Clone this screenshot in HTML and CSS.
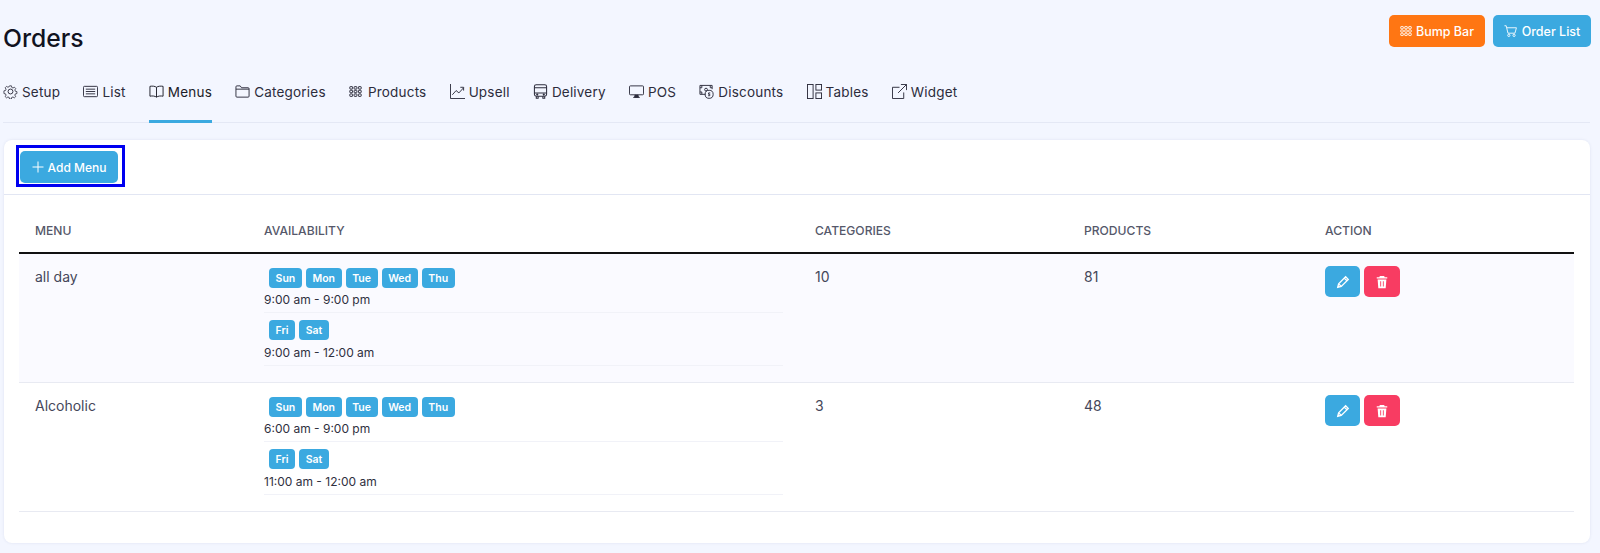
FILE: index.html
```html
<!DOCTYPE html>
<html lang="en">
<head>
<meta charset="utf-8">
<title>Orders</title>
<link rel="stylesheet" href="styles.css">
</head>
<body>
<svg class="defs" width="0" height="0" aria-hidden="true">
  <defs>
    <symbol id="grid" viewBox="0 0 16 16"><g fill="none" stroke="currentColor" stroke-width="1.2"><rect x="1" y="2" width="3.4" height="3" rx=".6"/><rect x="6.3" y="2" width="3.4" height="3" rx=".6"/><rect x="11.6" y="2" width="3.4" height="3" rx=".6"/><rect x="1" y="6.5" width="3.4" height="3" rx=".6"/><rect x="6.3" y="6.5" width="3.4" height="3" rx=".6"/><rect x="11.6" y="6.5" width="3.4" height="3" rx=".6"/><rect x="1" y="11" width="3.4" height="3" rx=".6"/><rect x="6.3" y="11" width="3.4" height="3" rx=".6"/><rect x="11.6" y="11" width="3.4" height="3" rx=".6"/></g></symbol>
  </defs>
</svg>
<div class="page">
  <header class="top">
    <h1 class="title">Orders</h1>
    <div class="top-actions">
      <a class="btn btn-orange"><svg class="ic12"><use href="#grid"/></svg>Bump Bar</a>
      <a class="btn btn-blue"><svg class="ic14" viewBox="0 0 16 16" fill="none" stroke="currentColor" stroke-width="1"><path d="M.5 2h2l2 8.5h8l1.7-6.2H3.2"/><circle cx="5.5" cy="13" r="1.3"/><circle cx="11.5" cy="13" r="1.3"/></svg>Order List</a>
    </div>
  </header>
  <nav class="tabs">
    <a class="tab"><svg class="tab-ic" viewBox="0 0 16 16" fill="none" stroke="currentColor" stroke-width="1"><circle cx="8" cy="8" r="2.6"/><path d="M6.8 1h2.4l.4 2 1.5.7 1.8-1 1.6 1.7-1.1 1.7.6 1.6 2 .5v2.4l-2 .4-.6 1.5 1.1 1.8-1.7 1.6-1.7-1.1-1.6.6-.4 2H6.8l-.4-2-1.6-.6-1.7 1.1-1.7-1.6 1.1-1.8-.6-1.5-2-.4V7.2l2-.5.6-1.6-1.1-1.7 1.7-1.7 1.7 1 1.6-.7z" transform="translate(1.1 1.1) scale(.86)"/></svg>Setup</a>
    <a class="tab"><svg class="tab-ic" viewBox="0 0 16 16" fill="none" stroke="currentColor" stroke-width="1"><rect x=".5" y="2.5" width="15" height="11" rx="1"/><path d="M3 5.500h10M3 8h10M3 10.500h10"/></svg>List</a>
    <a class="tab active"><svg class="tab-ic" viewBox="0 0 16 16" fill="none" stroke="currentColor" stroke-width="1"><path d="M8 3.500C6.500 2.300 3.500 2 1 2.500v10.500c2.500-.5 5.500-.2 7 1 1.500-1.200 4.500-1.500 7-1V2.500C12.500 2 9.500 2.300 8 3.500zM8 3.500V14"/></svg>Menus</a>
    <a class="tab"><svg class="tab-ic" viewBox="0 0 16 16" fill="none" stroke="currentColor" stroke-width="1"><path d="M1 13V3a1 1 0 0 1 1-1h3.500l1.500 2h7a1 1 0 0 1 1 1v8a1 1 0 0 1-1 1H2a1 1 0 0 1-1-1zM1 5.500h14"/></svg>Categories</a>
    <a class="tab"><svg class="tab-ic tab-ic-sm"><use href="#grid"/></svg>Products</a>
    <a class="tab"><svg class="tab-ic" viewBox="0 0 16 16" fill="none" stroke="currentColor" stroke-width="1"><path d="M.5 0v15.500H16M2.500 11.500l4-4.500 3 2.500 5-5.500M11 3.500h3.500V7"/></svg>Upsell</a>
    <a class="tab"><svg class="tab-ic" viewBox="0 0 16 16" fill="none" stroke="currentColor" stroke-width="1.100"><rect x="1.500" y=".7" width="13" height="12.300" rx="2"/><path d="M1.500 4h13M1.500 9.500h13M3.500 13v2.300h2V13M10.500 13v2.300h2V13"/><circle cx="4.500" cy="11.300" r=".6"/><circle cx="11.500" cy="11.300" r=".6"/></svg>Delivery</a>
    <a class="tab"><svg class="tab-ic" viewBox="0 0 16 16" fill="none" stroke="currentColor" stroke-width="1"><rect x=".5" y="2" width="15" height="9.500" rx="1"/><path d="M6.500 11.500l-.5 2.500h4l-.5-2.500M4.500 14.300h7" fill="currentColor"/></svg>POS</a>
    <a class="tab"><svg class="tab-ic" viewBox="0 0 16 16" fill="none" stroke="currentColor" stroke-width="1"><path d="M7 11H1V1.500h13v4"/><path d="M1 4h2V1.500M12 1.500V4h2M1 8.500h2V11"/><circle cx="10.800" cy="11" r="4.300"/><path d="M12 9.500h-1.800v1.500h1.300v1.500H9.700"/><circle cx="7.500" cy="6" r="1.500"/></svg>Discounts</a>
    <a class="tab"><svg class="tab-ic" viewBox="0 0 16 16" fill="none" stroke="currentColor" stroke-width="1"><rect x=".5" y=".5" width="6" height="15"/><rect x="9.500" y=".5" width="6" height="6"/><rect x="9.500" y="9.500" width="6" height="6"/></svg>Tables</a>
    <a class="tab"><svg class="tab-ic" viewBox="0 0 16 16" fill="none" stroke="currentColor" stroke-width="1"><path d="M12.500 9v6.500H.5v-12H8M9.500.5h6v6M15.500.500L6.500 9.500"/></svg>Widget</a>
  </nav>
  <section class="card">
    <div class="card-head">
      <div class="focus-box">
        <a class="btn btn-blue btn-add"><svg class="ic12" viewBox="0 0 12 12" fill="none" stroke="currentColor" stroke-width="1"><path d="M6 .5v11M.5 6h11"/></svg>Add Menu</a>
      </div>
    </div>
    <div class="card-body">
      <table class="table">
        <colgroup><col class="c1"><col class="c2"><col class="c3"><col class="c4"><col class="c5"></colgroup>
        <thead>
          <tr><th>Menu</th><th>Availability</th><th>Categories</th><th>Products</th><th>Action</th></tr>
        </thead>
        <tbody>
          <tr class="odd">
            <td>all day</td>
            <td>
              <div class="slot">
                <div class="days"><span class="day">Sun</span><span class="day">Mon</span><span class="day">Tue</span><span class="day">Wed</span><span class="day">Thu</span></div>
                <div class="time">9:00 am - 9:00 pm</div>
              </div>
              <div class="slot">
                <div class="days"><span class="day">Fri</span><span class="day">Sat</span></div>
                <div class="time">9:00 am - 12:00 am</div>
              </div>
            </td>
            <td>10</td>
            <td>81</td>
            <td>
              <div class="actions">
                <a class="icon-btn btn-blue"><svg viewBox="0 0 16 16" fill="none" stroke="currentColor" stroke-width="1.500"><path d="M2 14l1-4 8-8 3 3-8 8zM9.500 3.500l3 3M3 10l3 3"/></svg></a>
                <a class="icon-btn btn-red"><svg viewBox="0 0 16 16" fill="currentColor"><path d="M5.500 1h5l.5 1.500h3V4H2V2.500h3zM3 5h10l-.8 10H3.800zM6 7v6h1V7zm3 0v6h1V7z"/></svg></a>
              </div>
            </td>
          </tr>
          <tr>
            <td>Alcoholic</td>
            <td>
              <div class="slot">
                <div class="days"><span class="day">Sun</span><span class="day">Mon</span><span class="day">Tue</span><span class="day">Wed</span><span class="day">Thu</span></div>
                <div class="time">6:00 am - 9:00 pm</div>
              </div>
              <div class="slot">
                <div class="days"><span class="day">Fri</span><span class="day">Sat</span></div>
                <div class="time">11:00 am - 12:00 am</div>
              </div>
            </td>
            <td>3</td>
            <td>48</td>
            <td>
              <div class="actions">
                <a class="icon-btn btn-blue"><svg viewBox="0 0 16 16" fill="none" stroke="currentColor" stroke-width="1.500"><path d="M2 14l1-4 8-8 3 3-8 8zM9.500 3.500l3 3M3 10l3 3"/></svg></a>
                <a class="icon-btn btn-red"><svg viewBox="0 0 16 16" fill="currentColor"><path d="M5.500 1h5l.5 1.500h3V4H2V2.500h3zM3 5h10l-.8 10H3.800zM6 7v6h1V7zm3 0v6h1V7z"/></svg></a>
              </div>
            </td>
          </tr>
        </tbody>
      </table>
    </div>
  </section>
</div>
</body>
</html>
```

FILE: styles.css
```css
* { box-sizing: border-box; }
html, body { margin: 0; height: 100%; }
body {
  background: #f3f6ff;
  color: #1c1c28;
  font-family: Inter, "Noto Sans", sans-serif;
  overflow: hidden;
}
.defs { position: absolute; }
.page { padding: 0 9px 0 3px; }
.top {
  display: flex;
  justify-content: space-between;
  align-items: flex-start;
  height: 70px;
  padding-top: 15px;
}
.title {
  margin: 8px 0 0;
  font-size: 24.700px;
  line-height: 30px;
  font-weight: 500;
  color: #11131f;
}
.top-actions { display: flex; gap: 8px; }
.btn {
  display: flex;
  align-items: center;
  justify-content: center;
  gap: 4px;
  height: 32px;
  border-radius: 5px;
  color: #fff;
  font-size: 12.500px;
  font-weight: 500;
}
.btn-orange { background: #ff7613; width: 96px; }
.btn-blue { background: #3ba9e0; }
.top .btn-blue { width: 98px; }
.ic12 { width: 12px; height: 12px; }
.ic14 { width: 14px; height: 14px; }
.tabs {
  display: flex;
  gap: 23.200px;
  height: 53px;
  border-bottom: 1px solid #e4e8f5;
  margin-right: 1px;
}
.tab {
  display: flex;
  align-items: center;
  gap: 4px;
  height: 53px;
  font-size: 13.500px;
  letter-spacing: .2px;
  color: #2c2c3c;
  padding-bottom: 10px;
}
.tab.active { border-bottom: 3px solid #3ba9e0; color: #1c1c28; padding-bottom: 7px; }
.tab-ic { width: 15px; height: 15px; flex: none; }
.tab-ic-sm { width: 13px; height: 13px; margin-right: 2px; }
.card {
  margin: 17px 1px 0 1px;
  background: #fff;
  border-radius: 8px;
  height: 403px;
  box-shadow: 0 0 3px rgba(80, 90, 140, .12);
}
.card-head {
  height: 55px;
  border-bottom: 1px solid #e2e6f3;
  padding: 5px 0 0 12px;
}
.focus-box {
  width: 109px;
  height: 42px;
  border: 3px solid #0000f0;
  padding: 3px 1px;
}
.btn-add { width: 98px; height: 32px; gap: 4px; font-size: 12px; }
.card-body { padding: 0 16px 0 15px; }
.table { width: 100%; border-collapse: collapse; table-layout: fixed; }
.c1 { width: 229px; }
.c2 { width: 551px; }
.c3 { width: 269px; }
.c4 { width: 241px; }
th {
  height: 58px;
  padding: 14px 16px 0;
  text-align: left;
  text-transform: uppercase;
  font-size: 12.100px;
  font-weight: 500;
  color: #55586a;
  border-bottom: 2px solid #111;
}
td {
  vertical-align: top;
  padding: 14px 16px 9px;
  font-size: 14px;
  color: #45475a;
  border-bottom: 1px solid #e8eaf2;
}
.odd td { background: #fafaff; }
.slot { padding-bottom: 3px; margin-bottom: 7px; border-bottom: 1px solid #f1f2f8; }
.slot + .slot .time { margin-top: 4px; }
.days { display: flex; gap: 4px; padding-left: 5px; }
.day {
  height: 20px;
  padding: 0 6.600px;
  display: flex;
  align-items: center;
  border-radius: 4px;
  background: #3ba9e0;
  color: #fff;
  font-size: 10.500px;
  font-weight: 600;
}
.time { font-size: 12px; line-height: 18px; margin-top: 3px; color: #2f3040; }
.actions { display: flex; gap: 4px; margin-top: -2px; }
.icon-btn {
  width: 35px;
  height: 31px;
  border-radius: 5px;
  display: flex;
  align-items: center;
  justify-content: center;
  color: #fff;
}
.icon-btn svg { width: 14px; height: 14px; }
.btn-red { background: #f83c62; width: 36px; }
```
